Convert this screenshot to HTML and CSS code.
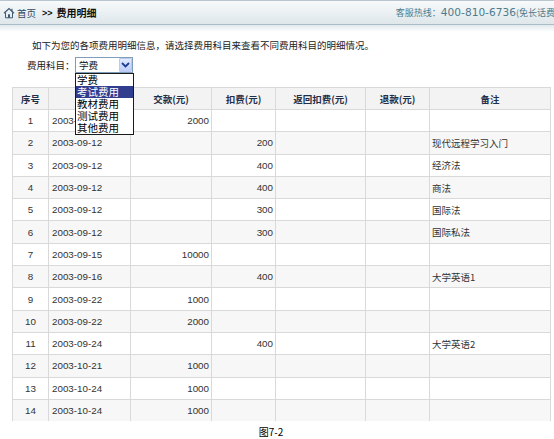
FILE: index.html
```html
<!DOCTYPE html>
<html lang="zh">
<head>
<meta charset="utf-8">
<title>费用明细</title>
<link rel="stylesheet" href="styles.css">
</head>
<body>
<div class="topbar">
  <div class="crumb">
    <svg class="home" width="12" height="12" viewBox="0 0 12 12">
      <path d="M1 6.2 L6 1.5 L11 6.2" fill="none" stroke="#3d5a73" stroke-width="1.2"/>
      <path d="M2.5 5.2 V10.8 H9.5 V5.2" fill="#e9eef2" stroke="#3d5a73" stroke-width="1"/>
      <rect x="5" y="7.3" width="2" height="3.5" fill="#3d5a73"/>
      <rect x="8.3" y="1.8" width="1.2" height="2.6" fill="#3d5a73"/>
    </svg>
    <span class="home-link">首页</span>
    <span class="sep">&gt;&gt;</span>
    <span class="current">费用明细</span>
  </div>
  <div class="hotline">客服热线：<span class="num">400-810-6736</span>(免长话费)</div>
</div>
<div class="topbar-shadow"></div>

<p class="intro">如下为您的各项费用明细信息，请选择费用科目来查看不同费用科目的明细情况。</p>

<div class="filter">
  <span class="filter-label">费用科目：</span>
  <div class="select">
    <span class="select-value">学费</span>
    <span class="select-btn">
      <svg width="9" height="6" viewBox="0 0 9 6"><path d="M1 1 L4.5 4.5 L8 1" fill="none" stroke="#1c3f94" stroke-width="1.8"/></svg>
    </span>
    <ul class="options">
      <li>学费</li>
      <li class="active">考试费用</li>
      <li>教材费用</li>
      <li>测试费用</li>
      <li>其他费用</li>
    </ul>
  </div>
</div>

<div class="table-wrap">
<table class="fees">
  <colgroup>
    <col class="c-no"><col class="c-date"><col class="c-pay"><col class="c-ded"><col class="c-ret"><col class="c-ref"><col class="c-note">
  </colgroup>
  <thead>
    <tr><th>序号</th><th></th><th>交款(元)</th><th>扣费(元)</th><th>返回扣费(元)</th><th>退款(元)</th><th>备注</th></tr>
  </thead>
  <tbody>
    <tr><td class="no">1</td><td class="date">2003-09-12</td><td class="amt">2000</td><td class="amt"></td><td></td><td></td><td class="note"></td></tr>
    <tr><td class="no">2</td><td class="date">2003-09-12</td><td class="amt"></td><td class="amt">200</td><td></td><td></td><td class="note">现代远程学习入门</td></tr>
    <tr><td class="no">3</td><td class="date">2003-09-12</td><td class="amt"></td><td class="amt">400</td><td></td><td></td><td class="note">经济法</td></tr>
    <tr><td class="no">4</td><td class="date">2003-09-12</td><td class="amt"></td><td class="amt">400</td><td></td><td></td><td class="note">商法</td></tr>
    <tr><td class="no">5</td><td class="date">2003-09-12</td><td class="amt"></td><td class="amt">300</td><td></td><td></td><td class="note">国际法</td></tr>
    <tr><td class="no">6</td><td class="date">2003-09-12</td><td class="amt"></td><td class="amt">300</td><td></td><td></td><td class="note">国际私法</td></tr>
    <tr><td class="no">7</td><td class="date">2003-09-15</td><td class="amt">10000</td><td class="amt"></td><td></td><td></td><td class="note"></td></tr>
    <tr><td class="no">8</td><td class="date">2003-09-16</td><td class="amt"></td><td class="amt">400</td><td></td><td></td><td class="note">大学英语1</td></tr>
    <tr><td class="no">9</td><td class="date">2003-09-22</td><td class="amt">1000</td><td class="amt"></td><td></td><td></td><td class="note"></td></tr>
    <tr><td class="no">10</td><td class="date">2003-09-22</td><td class="amt">2000</td><td class="amt"></td><td></td><td></td><td class="note"></td></tr>
    <tr><td class="no">11</td><td class="date">2003-09-24</td><td class="amt"></td><td class="amt">400</td><td></td><td></td><td class="note">大学英语2</td></tr>
    <tr><td class="no">12</td><td class="date">2003-10-21</td><td class="amt">1000</td><td class="amt"></td><td></td><td></td><td class="note"></td></tr>
    <tr><td class="no">13</td><td class="date">2003-10-24</td><td class="amt">1000</td><td class="amt"></td><td></td><td></td><td class="note"></td></tr>
    <tr><td class="no">14</td><td class="date">2003-10-24</td><td class="amt">1000</td><td class="amt"></td><td></td><td></td><td class="note"></td></tr>
    <tr><td class="no"></td><td class="date"></td><td class="amt"></td><td class="amt"></td><td></td><td></td><td class="note"></td></tr>
  </tbody>
</table>
</div>

<p class="caption">图7-2</p>
</body>
</html>
```

FILE: styles.css
```css
html, body {
  margin: 0;
  padding: 0;
  background: #fff;
}

body {
  width: 554px;
  overflow: hidden;
  font-family: "Noto Sans CJK SC", "Liberation Sans", sans-serif;
  font-size: 9.5px;
  color: #222;
}

.topbar {
  height: 23px;
  border-top: 1px solid #b7c5cd;
  border-bottom: 1px solid #a9bcc7;
  background: linear-gradient(#f8fafb, #e8eef1 60%, #dfe7eb);
  display: flex;
  align-items: center;
  justify-content: space-between;
}

.crumb {
  display: flex;
  align-items: center;
  padding-left: 3px;
}

.home {
  display: block;
  margin-right: 2px;
}

.home-link {
  color: #2e4a63;
  font-size: 9.5px;
  margin-right: 6px;
}

.sep {
  font-family: "Liberation Sans", sans-serif;
  font-weight: bold;
  font-size: 9px;
  color: #111;
  margin-right: 4px;
}

.current {
  font-weight: bold;
  font-size: 10px;
  color: #111;
}

.hotline {
  color: #4d7b8c;
  font-size: 9px;
  white-space: nowrap;
  margin-right: -4px;
}

.hotline .num {
  font-family: "DejaVu Sans", sans-serif;
  font-size: 10.6px;
}

.topbar-shadow {
  height: 7px;
  background: linear-gradient(#e2e9ed, #ffffff);
}

.intro {
  margin: 5px 0 0 0;
  padding-left: 32px;
  line-height: 16px;
  color: #222;
}

.filter {
  display: flex;
  align-items: center;
  height: 16px;
  margin-top: 4px;
  padding-left: 27px;
}

.filter-label {
  width: 48px;
  color: #222;
}

.select {
  position: relative;
  width: 58px;
  height: 16px;
  box-sizing: border-box;
  border: 1px solid #7f9db9;
  background: #fff;
  display: flex;
  align-items: center;
  justify-content: space-between;
}

.select-value {
  padding-left: 3px;
  color: #111;
}

.select-btn {
  width: 13px;
  height: 14px;
  box-sizing: border-box;
  border: 1px solid #b9c9ef;
  border-radius: 1px;
  background: linear-gradient(#e1eafe, #bccdf8);
  display: flex;
  align-items: center;
  justify-content: center;
}

.select-btn svg {
  display: block;
}

.options {
  position: absolute;
  left: -1px;
  top: 15px;
  width: 59px;
  margin: 0;
  padding: 0;
  list-style: none;
  background: #fff;
  border: 1px solid #1a1a1a;
  box-sizing: border-box;
  z-index: 5;
}

.options li {
  height: 12px;
  line-height: 12px;
  padding-left: 1px;
  font-size: 10.5px;
  color: #000;
}

.options li.active {
  background: #313d8e;
  color: #fff;
}

.table-wrap {
  margin: 14px 0 0 12px;
  width: 540px;
  height: 334px;
  overflow: hidden;
}

.fees {
  border-collapse: collapse;
  table-layout: fixed;
  width: 538px;
}

.c-no { width: 36px; }
.c-date { width: 82px; }
.c-pay { width: 81px; }
.c-ded { width: 64px; }
.c-ret { width: 90px; }
.c-ref { width: 64px; }
.c-note { width: 121px; }

.fees th,
.fees td {
  border: 1px solid #d9d9d9;
  padding: 0;
  white-space: nowrap;
  overflow: hidden;
}

.fees th {
  height: 21px;
  background: #f3f3f3;
  color: #1e2f4a;
  font-weight: bold;
  font-size: 9.5px;
  text-align: center;
}

.fees td {
  height: 21.3px;
  color: #333;
}

.fees tbody tr:nth-child(even) td {
  background: #f7f7f7;
}

.fees td.no {
  text-align: center;
  font-family: "Liberation Sans", sans-serif;
  font-size: 9.8px;
}

.fees td.date {
  padding-left: 3px;
  font-family: "Liberation Sans", sans-serif;
  font-size: 9.8px;
}

.fees td.amt {
  text-align: right;
  padding-right: 2px;
  font-family: "Liberation Sans", sans-serif;
  font-size: 9.8px;
}

.fees td.note {
  padding-left: 2px;
  font-size: 9.5px;
}

.caption {
  margin: 3px 0 0 0;
  line-height: 16px;
  text-align: center;
  font-size: 10px;
  color: #000;
  padding-left: 0;
  margin-left: -12px;
}
```
